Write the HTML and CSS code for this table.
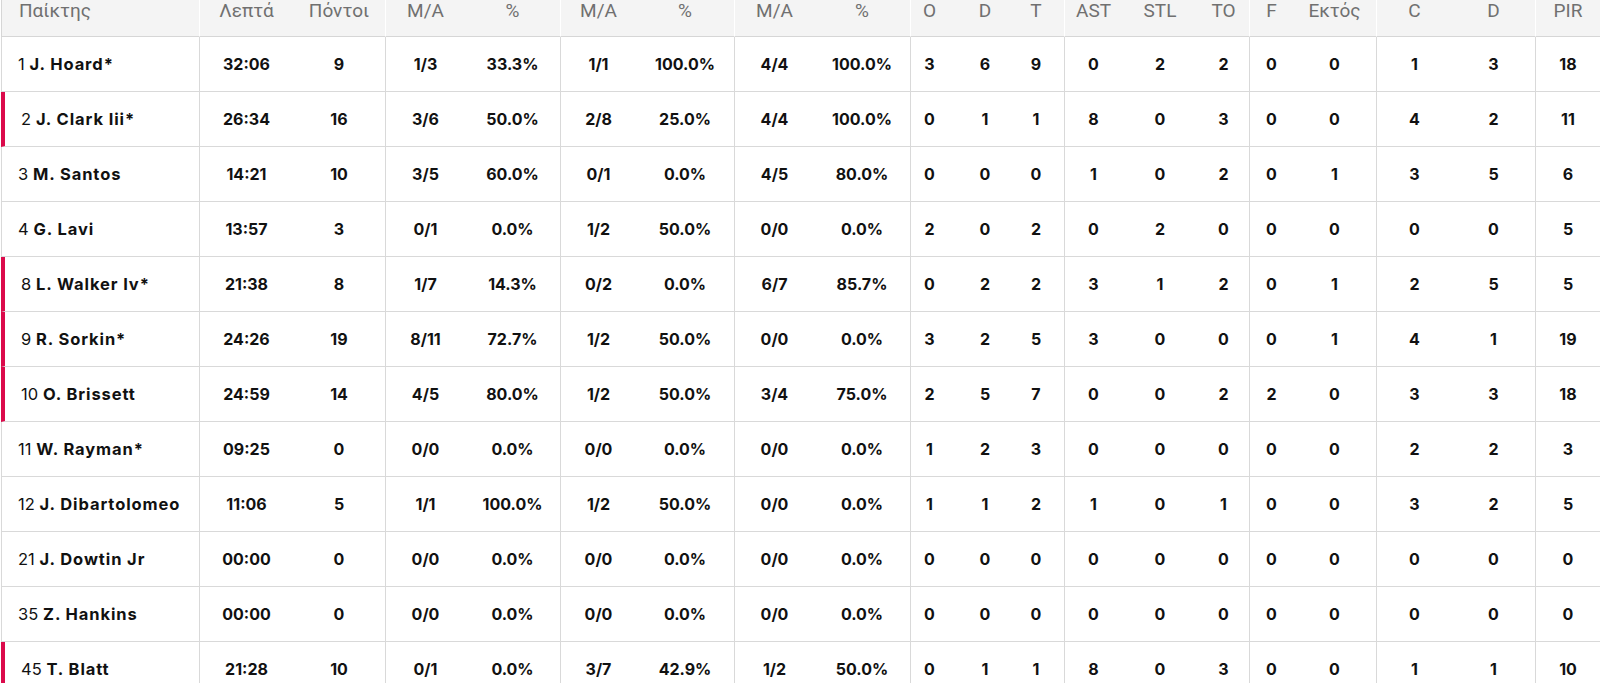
FILE: index.html
```html
<!DOCTYPE html>
<html lang="el">
<head>
<meta charset="utf-8">
<title>Box score</title>
<link rel="stylesheet" href="styles.css">
</head>
<body>
<table class="box">
  <colgroup>
    <col class="w198"><col class="w94"><col class="w92">
    <col class="w80"><col class="w95"><col class="w76"><col class="w98"><col class="w80"><col class="w96">
    <col class="w38"><col class="w74"><col class="w42">
    <col class="w58"><col class="w76"><col class="w51">
    <col class="w44"><col class="w83"><col class="w76"><col class="w83"><col class="w65">
  </colgroup>
  <thead>
    <tr>
      <th class="name">Παίκτης</th>
      <th class="g">Λεπτά</th><th>Πόντοι</th>
      <th class="g">Μ/Α</th><th>%</th>
      <th class="g">Μ/Α</th><th>%</th>
      <th class="g">Μ/Α</th><th>%</th>
      <th class="g">O</th><th>D</th><th class="pr">T</th>
      <th class="g">AST</th><th>STL</th><th>TO</th>
      <th class="g">F</th><th>Εκτός</th>
      <th class="g">C</th><th>D</th>
      <th class="g">PIR</th>
    </tr>
  </thead>
  <tbody>
    <tr><td class="name"><span class="num">1</span> J. Hoard*</td><td class="g">32:06</td><td>9</td><td class="g">1/3</td><td>33.3%</td><td class="g">1/1</td><td>100.0%</td><td class="g">4/4</td><td>100.0%</td><td class="g">3</td><td>6</td><td class="pr">9</td><td class="g">0</td><td>2</td><td>2</td><td class="g">0</td><td>0</td><td class="g">1</td><td>3</td><td class="g">18</td></tr>
    <tr><td class="name on"><span class="num">2</span> J. Clark Iii*</td><td class="g">26:34</td><td>16</td><td class="g">3/6</td><td>50.0%</td><td class="g">2/8</td><td>25.0%</td><td class="g">4/4</td><td>100.0%</td><td class="g">0</td><td>1</td><td class="pr">1</td><td class="g">8</td><td>0</td><td>3</td><td class="g">0</td><td>0</td><td class="g">4</td><td>2</td><td class="g">11</td></tr>
    <tr><td class="name"><span class="num">3</span> M. Santos</td><td class="g">14:21</td><td>10</td><td class="g">3/5</td><td>60.0%</td><td class="g">0/1</td><td>0.0%</td><td class="g">4/5</td><td>80.0%</td><td class="g">0</td><td>0</td><td class="pr">0</td><td class="g">1</td><td>0</td><td>2</td><td class="g">0</td><td>1</td><td class="g">3</td><td>5</td><td class="g">6</td></tr>
    <tr><td class="name"><span class="num">4</span> G. Lavi</td><td class="g">13:57</td><td>3</td><td class="g">0/1</td><td>0.0%</td><td class="g">1/2</td><td>50.0%</td><td class="g">0/0</td><td>0.0%</td><td class="g">2</td><td>0</td><td class="pr">2</td><td class="g">0</td><td>2</td><td>0</td><td class="g">0</td><td>0</td><td class="g">0</td><td>0</td><td class="g">5</td></tr>
    <tr><td class="name on"><span class="num">8</span> L. Walker Iv*</td><td class="g">21:38</td><td>8</td><td class="g">1/7</td><td>14.3%</td><td class="g">0/2</td><td>0.0%</td><td class="g">6/7</td><td>85.7%</td><td class="g">0</td><td>2</td><td class="pr">2</td><td class="g">3</td><td>1</td><td>2</td><td class="g">0</td><td>1</td><td class="g">2</td><td>5</td><td class="g">5</td></tr>
    <tr><td class="name on"><span class="num">9</span> R. Sorkin*</td><td class="g">24:26</td><td>19</td><td class="g">8/11</td><td>72.7%</td><td class="g">1/2</td><td>50.0%</td><td class="g">0/0</td><td>0.0%</td><td class="g">3</td><td>2</td><td class="pr">5</td><td class="g">3</td><td>0</td><td>0</td><td class="g">0</td><td>1</td><td class="g">4</td><td>1</td><td class="g">19</td></tr>
    <tr><td class="name on"><span class="num">10</span> O. Brissett</td><td class="g">24:59</td><td>14</td><td class="g">4/5</td><td>80.0%</td><td class="g">1/2</td><td>50.0%</td><td class="g">3/4</td><td>75.0%</td><td class="g">2</td><td>5</td><td class="pr">7</td><td class="g">0</td><td>0</td><td>2</td><td class="g">2</td><td>0</td><td class="g">3</td><td>3</td><td class="g">18</td></tr>
    <tr><td class="name"><span class="num">11</span> W. Rayman*</td><td class="g">09:25</td><td>0</td><td class="g">0/0</td><td>0.0%</td><td class="g">0/0</td><td>0.0%</td><td class="g">0/0</td><td>0.0%</td><td class="g">1</td><td>2</td><td class="pr">3</td><td class="g">0</td><td>0</td><td>0</td><td class="g">0</td><td>0</td><td class="g">2</td><td>2</td><td class="g">3</td></tr>
    <tr><td class="name"><span class="num">12</span> J. Dibartolomeo</td><td class="g">11:06</td><td>5</td><td class="g">1/1</td><td>100.0%</td><td class="g">1/2</td><td>50.0%</td><td class="g">0/0</td><td>0.0%</td><td class="g">1</td><td>1</td><td class="pr">2</td><td class="g">1</td><td>0</td><td>1</td><td class="g">0</td><td>0</td><td class="g">3</td><td>2</td><td class="g">5</td></tr>
    <tr><td class="name"><span class="num">21</span> J. Dowtin Jr</td><td class="g">00:00</td><td>0</td><td class="g">0/0</td><td>0.0%</td><td class="g">0/0</td><td>0.0%</td><td class="g">0/0</td><td>0.0%</td><td class="g">0</td><td>0</td><td class="pr">0</td><td class="g">0</td><td>0</td><td>0</td><td class="g">0</td><td>0</td><td class="g">0</td><td>0</td><td class="g">0</td></tr>
    <tr><td class="name"><span class="num">35</span> Z. Hankins</td><td class="g">00:00</td><td>0</td><td class="g">0/0</td><td>0.0%</td><td class="g">0/0</td><td>0.0%</td><td class="g">0/0</td><td>0.0%</td><td class="g">0</td><td>0</td><td class="pr">0</td><td class="g">0</td><td>0</td><td>0</td><td class="g">0</td><td>0</td><td class="g">0</td><td>0</td><td class="g">0</td></tr>
    <tr><td class="name on"><span class="num">45</span> T. Blatt</td><td class="g">21:28</td><td>10</td><td class="g">0/1</td><td>0.0%</td><td class="g">3/7</td><td>42.9%</td><td class="g">1/2</td><td>50.0%</td><td class="g">0</td><td>1</td><td class="pr">1</td><td class="g">8</td><td>0</td><td>3</td><td class="g">0</td><td>0</td><td class="g">1</td><td>1</td><td class="g">10</td></tr>
  </tbody>
</table>
</body>
</html>
```
FILE: styles.css
```css
html, body {
  margin: 0;
  padding: 0;
  background: #ffffff;
  overflow: hidden;
}
.box {
  margin-left: 1px;
  width: 1599px;
  table-layout: fixed;
  border-collapse: separate;
  border-spacing: 0;
  font-family: Inter, "Liberation Sans", sans-serif;
  color: #111111;
}
.w198 { width: 198px; }
.w94 { width: 94px; }
.w92 { width: 92px; }
.w80 { width: 80px; }
.w95 { width: 95px; }
.w76 { width: 76px; }
.w98 { width: 98px; }
.w96 { width: 96px; }
.w38 { width: 38px; }
.w74 { width: 74px; }
.w42 { width: 42px; }
.w58 { width: 58px; }
.w51 { width: 51px; }
.w44 { width: 44px; }
.w83 { width: 83px; }
.w65 { width: 65px; }

.box th {
  height: 37px;
  box-sizing: border-box;
  padding: 0 0 15px 0;
  background: #f4f4f4;
  border-bottom: 1px solid #d6d6d6;
  font-family: Roboto, "Liberation Sans", sans-serif;
  font-weight: 400;
  font-size: 19px;
  line-height: 21px;
  color: #707070;
  text-align: center;
  vertical-align: top;
  white-space: nowrap;
}
.box th.g { border-left: 1px solid #ffffff; }
.box th.name {
  text-align: left;
  padding-left: 17px;
  border-left: 1px solid #d6d6d6;
}

.box td {
  height: 55px;
  box-sizing: border-box;
  padding: 0;
  border-bottom: 1px solid #d9d9d9;
  font-size: 16px;
  font-weight: 700;
  text-align: center;
  vertical-align: middle;
  white-space: nowrap;
}
.box td.g { border-left: 1px solid #d9d9d9; }
.box td.name {
  text-align: left;
  padding-left: 16px;
  border-left: 1px solid #d9d9d9;
  font-size: 16.5px;
  letter-spacing: 0.9px;
}
.box td.name.on {
  border-left: 4px solid #db0a4b;
}
.box .pr { padding-right: 14px; }
.num { font-weight: 400; letter-spacing: 0; }
```
